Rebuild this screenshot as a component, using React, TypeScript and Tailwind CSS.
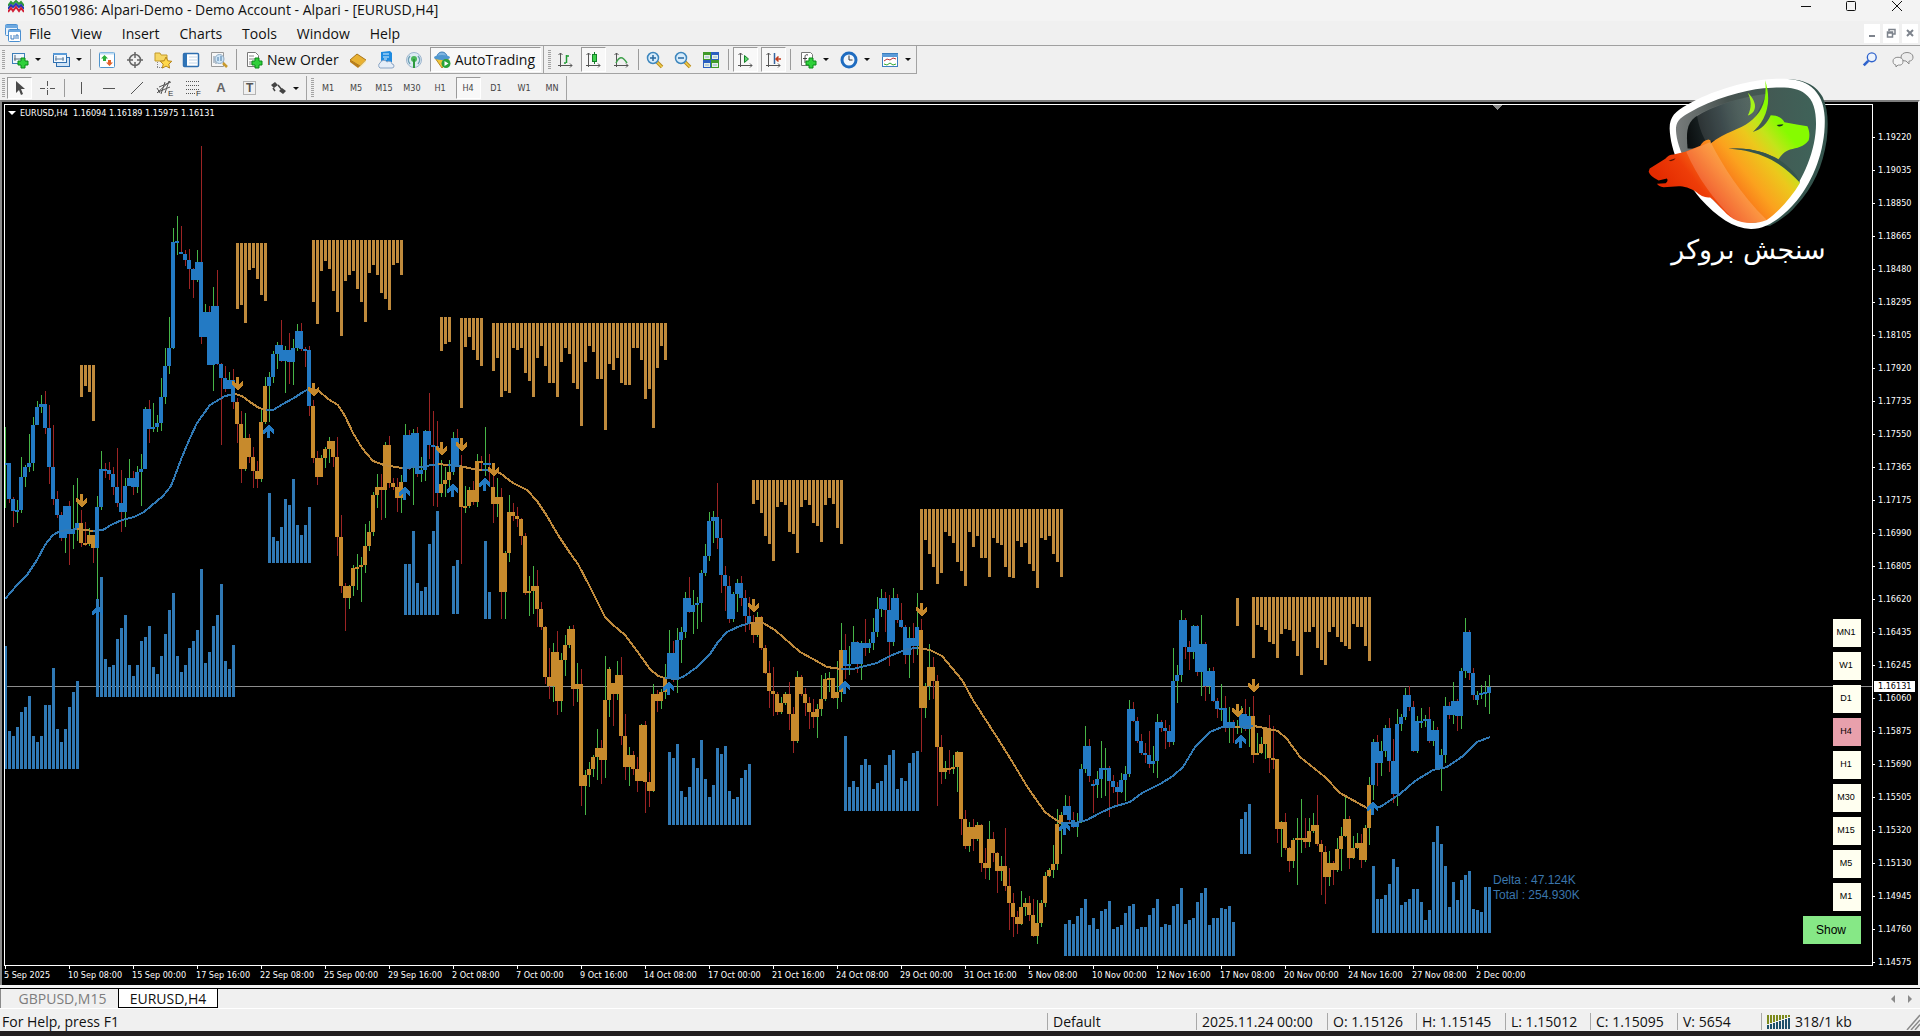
import type { ReactNode } from "react";

type Trend = "up" | "down";
// close, high, low and, after a gap, the open
type Candle = [number, number, number, number?];

type Wave = {
  start: number;
  trend: Trend;
  base: number;
  ends: number[];
};

const PITCH = 4;
const BLUE = "#237ac4";
const ORANGE = "#c78a2c";
const LINE_BLUE = "#3079b5";
const LINE_ORANGE = "#bf8a3c";

const menuItems = ["File", "View", "Insert", "Charts", "Tools", "Window", "Help"];
const periods = ["M1", "M5", "M15", "M30", "H1", "H4", "D1", "W1", "MN"];
const panelPeriods = ["MN1", "W1", "D1", "H4", "H1", "M30", "M15", "M5", "M1"];

const prices = [
  "1.19220", "1.19035", "1.18850", "1.18665", "1.18480", "1.18295", "1.18105",
  "1.17920", "1.17735", "1.17550", "1.17365", "1.17175", "1.16990", "1.16805",
  "1.16620", "1.16435", "1.16245", "1.16060", "1.15875", "1.15690", "1.15505",
  "1.15320", "1.15130", "1.14945", "1.14760", "1.14575",
];

const times = [
  "5 Sep 2025", "10 Sep 08:00", "15 Sep 00:00", "17 Sep 16:00", "22 Sep 08:00",
  "25 Sep 00:00", "29 Sep 16:00", "2 Oct 08:00", "7 Oct 00:00", "9 Oct 16:00",
  "14 Oct 08:00", "17 Oct 00:00", "21 Oct 16:00", "24 Oct 08:00", "29 Oct 00:00",
  "31 Oct 16:00", "5 Nov 08:00", "10 Nov 00:00", "12 Nov 16:00", "17 Nov 08:00",
  "20 Nov 00:00", "24 Nov 16:00", "27 Nov 08:00", "2 Dec 00:00",
];

const candles: Candle[] = [
  [463, 427, 508], [499, 463, 503], [511, 497, 527], [510, 500, 523], [477, 457, 513],
  [467, 465, 487], [463, 434, 472], [425, 417, 471], [407, 401, 421], [404, 395, 413],
  [428, 391, 434], [467, 405, 484], [499, 425, 505], [515, 491, 518], [538, 512, 541],
  [506, 506, 553], [534, 501, 565], [530, 485, 549], [523, 478, 541], [543, 510, 547],
  [544, 522, 546], [535, 528, 546], [548, 535, 563], [507, 496, 599], [469, 451, 510],
  [470, 463, 478], [474, 462, 480], [487, 467, 495], [503, 448, 507], [512, 470, 532],
  [486, 478, 527], [478, 459, 486], [487, 471, 495], [472, 466, 493], [469, 454, 506],
  [409, 407, 468], [429, 400, 443], [427, 403, 432], [423, 415, 432], [397, 378, 431],
  [366, 348, 404], [348, 317, 374], [242, 228, 349], [241, 216, 255], [254, 226, 254, 252],
  [260, 250, 266], [269, 249, 289], [280, 268, 298], [262, 250, 282], [337, 146, 344],
  [312, 304, 336], [365, 306, 365], [306, 287, 391], [364, 270, 365], [378, 363, 445],
  [389, 366, 392], [380, 372, 389], [402, 369, 409], [424, 398, 443], [469, 411, 483],
  [438, 413, 471], [457, 434, 463], [471, 447, 488], [479, 461, 488], [422, 410, 482],
  [386, 377, 424], [377, 372, 422], [354, 351, 383], [345, 342, 369], [361, 320, 362],
  [350, 346, 393], [362, 333, 384], [348, 339, 385], [331, 324, 351], [349, 323, 351],
  [350, 347, 367], [406, 346, 416], [458, 400, 463], [477, 451, 485], [458, 455, 477],
  [449, 447, 468], [441, 437, 463], [457, 441, 467], [537, 437, 556], [586, 515, 593],
  [598, 583, 631], [586, 585, 609], [568, 565, 596], [567, 554, 590], [565, 557, 602],
  [546, 524, 573], [532, 521, 551], [495, 492, 536], [487, 474, 508], [490, 474, 520],
  [445, 442, 518], [483, 436, 488], [487, 478, 490], [498, 478, 512], [482, 475, 513],
  [435, 424, 482], [468, 430, 470], [433, 429, 505], [474, 427, 477], [470, 457, 482],
  [431, 430, 481], [445, 393, 459], [446, 411, 506], [493, 421, 507], [484, 460, 497],
  [480, 467, 497], [472, 460, 490], [438, 432, 475], [467, 429, 467], [507, 455, 564],
  [506, 486, 513], [490, 487, 508], [502, 481, 505], [461, 454, 507], [463, 456, 469],
  [463, 427, 476], [464, 454, 484], [504, 476, 523, 487], [497, 478, 517], [592, 488, 619],
  [553, 551, 619], [512, 495, 562], [516, 503, 521], [519, 507, 527], [536, 518, 545],
  [593, 533, 595], [591, 576, 616], [586, 566, 614], [609, 570, 627], [627, 602, 630],
  [677, 626, 684], [686, 648, 699], [652, 643, 702], [701, 631, 715], [660, 653, 712],
  [645, 635, 676], [629, 626, 648], [689, 625, 706], [684, 663, 702], [786, 669, 806],
  [775, 770, 815], [769, 762, 787], [757, 755, 777], [748, 729, 780], [760, 740, 784],
  [700, 656, 778], [669, 667, 717], [694, 683, 726, 683], [675, 661, 700], [736, 657, 745],
  [767, 714, 780], [755, 747, 786], [769, 751, 775], [781, 757, 792], [725, 724, 781],
  [782, 721, 813], [791, 772, 807], [694, 684, 792], [701, 690, 712], [692, 689, 709],
  [678, 664, 699], [653, 630, 679], [680, 641, 682], [640, 628, 693], [632, 627, 663],
  [598, 592, 638], [612, 577, 613], [605, 590, 634], [603, 597, 629], [573, 570, 622],
  [556, 544, 576], [521, 512, 561], [517, 511, 543], [538, 483, 549], [575, 519, 593],
  [586, 566, 611], [619, 576, 623], [594, 592, 622], [583, 579, 612], [598, 576, 606],
  [616, 590, 632], [623, 597, 630], [635, 615, 643], [617, 612, 637], [648, 616, 650],
  [673, 645, 674], [691, 661, 708], [694, 667, 716], [712, 692, 715], [703, 697, 714],
  [694, 692, 705], [714, 682, 730], [741, 707, 753], [677, 671, 743], [694, 675, 696],
  [703, 688, 716], [712, 697, 729], [717, 699, 728], [709, 704, 738], [699, 675, 716],
  [679, 673, 701], [678, 672, 692], [698, 678, 699], [692, 661, 709], [650, 623, 702],
  [666, 634, 679], [664, 646, 675], [642, 626, 664], [664, 641, 673], [643, 641, 680],
  [648, 619, 656], [643, 639, 653], [632, 618, 650], [609, 597, 637], [598, 589, 617],
  [610, 592, 632], [642, 595, 666], [598, 588, 646], [620, 594, 623], [627, 603, 628],
  [655, 625, 664], [638, 627, 678], [646, 623, 663], [627, 593, 655], [708, 619, 752, 630],
  [686, 683, 718], [667, 644, 700], [681, 657, 699], [747, 675, 806], [772, 735, 784],
  [768, 761, 779], [769, 750, 774], [767, 755, 774], [752, 751, 792], [819, 752, 835],
  [846, 810, 849], [827, 822, 852], [839, 819, 851], [825, 822, 841], [863, 824, 872],
  [868, 848, 879], [839, 821, 880], [853, 832, 862], [871, 852, 893], [866, 856, 881],
  [886, 828, 891], [903, 868, 930], [917, 893, 937], [924, 911, 934], [907, 891, 925],
  [903, 898, 916], [915, 896, 921], [936, 899, 937], [923, 900, 944], [903, 900, 927],
  [876, 872, 907], [870, 868, 877], [864, 845, 878], [824, 809, 870], [815, 812, 854],
  [806, 795, 814], [820, 796, 823], [827, 812, 828], [822, 813, 837], [769, 764, 823],
  [746, 726, 773], [776, 739, 782], [785, 780, 813, 784], [779, 771, 798], [768, 741, 798],
  [768, 748, 796], [781, 766, 817], [787, 775, 793], [792, 782, 805], [780, 773, 793],
  [774, 766, 801], [709, 700, 777], [721, 702, 722], [741, 717, 743], [753, 734, 755],
  [755, 743, 763], [764, 731, 768], [761, 746, 773], [722, 714, 778], [728, 720, 732],
  [731, 720, 749], [742, 725, 747], [681, 648, 745], [675, 665, 703], [620, 610, 682],
  [647, 618, 659], [652, 641, 670], [626, 625, 659], [672, 625, 676], [644, 615, 696],
  [686, 642, 701], [671, 668, 694], [701, 667, 702], [709, 698, 718], [708, 684, 721],
  [727, 696, 732], [722, 707, 743], [727, 720, 743], [726, 720, 734], [714, 706, 733],
  [729, 699, 731], [716, 707, 747], [755, 696, 763], [753, 733, 755], [744, 737, 754],
  [729, 727, 759], [758, 715, 773], [759, 726, 769], [829, 759, 843], [822, 821, 857],
  [848, 813, 850], [861, 847, 872], [840, 838, 868], [838, 818, 885], [838, 799, 853],
  [842, 818, 848], [831, 818, 847], [825, 813, 833], [844, 795, 846], [852, 840, 895],
  [877, 846, 904], [863, 851, 886], [870, 861, 885], [849, 838, 872], [836, 827, 871],
  [819, 797, 837], [858, 816, 869], [848, 836, 859], [843, 833, 849], [860, 834, 868],
  [828, 825, 862], [785, 777, 845], [742, 739, 800], [763, 735, 786], [751, 741, 776],
  [728, 725, 757], [761, 718, 772], [794, 739, 803], [724, 709, 806], [717, 714, 731],
  [695, 688, 720], [707, 686, 711], [751, 701, 752], [721, 716, 753], [721, 708, 728],
  [719, 715, 727], [741, 707, 743], [730, 721, 746], [768, 727, 770], [755, 749, 791],
  [706, 697, 763], [715, 702, 719], [701, 682, 724], [716, 699, 731], [671, 668, 729],
  [632, 618, 678], [673, 630, 680], [695, 668, 700], [695, 691, 705, 700], [693, 685, 699],
  [692, 681, 707], [687, 675, 714, 693],
];

const waves: Wave[] = [
  { start: 1, trend: "up", base: 769, ends: [646, 731, 736, 727, 712, 707, 696, 736, 742, 736, 705, 705, 668, 729, 742, 729, 707, 692, 681] },
  { start: 20, trend: "down", base: 365, ends: [397, 386, 392, 421] },
  { start: 24, trend: "up", base: 697, ends: [599, 577, 659, 667, 665, 639, 628, 615, 665, 676, 665, 641, 637, 626, 667, 674, 656, 634, 610, 593, 656, 672, 665, 648, 641, 630, 569, 663, 652, 626, 615, 584, 661, 669, 645] },
  { start: 59, trend: "down", base: 243, ends: [309, 305, 323, 270, 268, 279, 295, 301] },
  { start: 67, trend: "up", base: 563, ends: [493, 537, 541, 527, 499, 505, 479, 525, 535, 525, 507] },
  { start: 78, trend: "down", base: 240, ends: [302, 324, 271, 261, 269, 291, 312, 336, 281, 275, 271, 289, 302, 322, 273, 265, 275, 293, 299, 310, 265, 263, 275] },
  { start: 101, trend: "up", base: 615, ends: [564, 564, 531, 583, 591, 587, 544, 531, 511] },
  { start: 110, trend: "down", base: 317, ends: [351, 344, 342] },
  { start: 113, trend: "up", base: 614, ends: [566, 560] },
  { start: 115, trend: "down", base: 318, ends: [408, 347, 337, 350, 360, 366] },
  { start: 121, trend: "up", base: 619, ends: [541, 592] },
  { start: 123, trend: "down", base: 323, ends: [371, 358, 397, 391, 393, 348, 350, 348, 373, 381, 397, 358, 346, 366, 383, 383, 397, 362, 348, 354, 383, 389, 426, 362, 346, 352, 379, 379, 430, 364, 370, 358, 383, 385, 385, 348, 348, 360, 399, 389, 428, 368, 346, 360] },
  { start: 167, trend: "up", base: 825, ends: [752, 758, 744, 791, 797, 787, 758, 768, 740, 779, 797, 785, 748, 754, 746, 791, 799, 797, 778, 770, 764] },
  { start: 188, trend: "down", base: 480, ends: [504, 500, 513, 536, 544, 561, 507, 502, 505, 532, 534, 553, 507, 500, 505, 523, 526, 542, 505, 498, 504, 528, 544] },
  { start: 211, trend: "up", base: 811, ends: [736, 787, 781, 787, 765, 759, 765, 789, 783, 781, 765, 755, 750, 789, 778, 781, 763, 753, 751] },
  { start: 230, trend: "down", base: 509, ends: [590, 540, 554, 567, 584, 573, 532, 536, 543, 562, 571, 586, 532, 547, 536, 558, 558, 577, 538, 543, 545, 567, 577, 578, 541, 547, 543, 564, 571, 588, 538, 540, 536, 554, 562, 577] },
  { start: 266, trend: "up", base: 956, ends: [924, 920, 924, 916, 908, 899, 925, 918, 929, 911, 909, 901, 929, 927, 925, 913, 906, 904, 929, 927, 927, 915, 908, 899, 927, 924, 925, 906, 904, 888, 924, 920, 918, 902, 893, 888, 925, 918, 918, 908, 909, 906, 922] },
  { start: 309, trend: "down", base: 598, ends: [626] },
  { start: 310, trend: "up", base: 854, ends: [819, 812, 804] },
  { start: 313, trend: "down", base: 597, ends: [658, 625, 627, 630, 642, 644, 658, 634, 629, 630, 641, 656, 675, 632, 632, 627, 648, 660, 665, 632, 627, 637, 642, 646, 649, 624, 627, 627, 646, 661] },
  { start: 343, trend: "up", base: 933, ends: [866, 899, 899, 895, 884, 859, 867, 905, 902, 899, 889, 889, 902, 920, 910, 842, 826, 844, 866, 907, 882, 900, 880, 875, 871, 909, 910, 912, 887, 887] },
];

const average: { trend: Trend; points: string }[] = [
  { trend: "up", points: "5,599 17,585 27,575 37,560 45,545 53,535 60,531 77,529" },
  { trend: "down", points: "77,529 93,531" },
  { trend: "up", points: "93,531 103,530 111,525 122,520 134,517 144,512 157,501 163,496 171,486 182,457 190,438 197,423 210,405 225,396 235,394" },
  { trend: "down", points: "235,394 242,396 250,402 259,408 266,410" },
  { trend: "up", points: "266,410 273,410 283,404 294,398 303,392 309,389" },
  { trend: "down", points: "309,389 319,391 328,399 338,405 345,416 353,433 362,448 373,461 384,465 402,468" },
  { trend: "up", points: "402,468 420,467 438,464" },
  { trend: "down", points: "438,464 448,465" },
  { trend: "up", points: "448,465 460,466" },
  { trend: "down", points: "460,466 473,469 482,470" },
  { trend: "up", points: "482,470 494,471" },
  { trend: "down", points: "494,471 500,473 513,483 527,490 537,501 547,516 558,535 570,553 578,564 590,587 605,617 612,624 625,635 637,651 650,669 658,676 665,678" },
  { trend: "up", points: "665,678 676,679 683,677 697,667 710,654 718,642 727,632 740,626 750,623" },
  { trend: "down", points: "750,623 763,623 775,630 800,652 813,659 827,667 841,669" },
  { trend: "up", points: "841,669 853,669 877,663 890,656 907,649 918,648" },
  { trend: "down", points: "918,648 930,650 942,656 962,680 973,700 1000,742 1013,763 1028,788 1045,812 1053,818 1061,823" },
  { trend: "up", points: "1061,823 1075,823 1087,820 1100,813 1113,807 1130,802 1142,793 1160,784 1173,776 1183,767 1195,747 1210,732 1222,727 1235,727" },
  { trend: "down", points: "1235,727 1240,727" },
  { trend: "up", points: "1240,727 1253,726" },
  { trend: "down", points: "1253,726 1260,727 1278,731 1287,739 1300,757 1325,777 1340,793 1367,808" },
  { trend: "up", points: "1367,808 1380,807 1400,794 1415,781 1433,770 1447,767 1463,756 1477,742 1490,737" },
];

const sellArrows = [
  [81, 494], [237, 377], [313, 383], [441, 442], [461, 438],
  [493, 463], [753, 599], [921, 603], [1237, 704], [1253, 679],
];

const buyArrows = [
  [97, 606], [268, 425], [404, 487], [452, 484], [484, 478],
  [668, 682], [844, 681], [1064, 822], [1240, 735], [1372, 802],
];

function trendAt(index: number): Trend {
  const wave = waves.find(
    (w) => index >= w.start && index < w.start + w.ends.length,
  );
  return wave ? wave.trend : "up";
}

function PriceChart() {
  return (
    <svg className="absolute inset-0 h-full w-full" role="img" aria-label="EURUSD H4 chart">
      {/* data is in window coordinates, the plot starts at 5,105 */}
      <g transform="translate(-5 -105)" shapeRendering="crispEdges">
        <rect x="5" y="686" width="100%" height="1" fill="#8c8c8c" />
        {waves.map((wave) =>
          wave.ends.map((end, i) => (
            <rect
              key={`${wave.start}-${i}`}
              x={(wave.start + i) * PITCH}
              y={Math.min(end, wave.base)}
              width="3"
              height={Math.abs(wave.base - end)}
              fill={wave.trend === "up" ? LINE_BLUE : LINE_ORANGE}
            />
          )),
        )}
        {candles.map(([close, high, low, gapOpen], i) => {
          const index = i + 1;
          const open = gapOpen ?? candles[i - 1]?.[0] ?? close;
          const x = index * PITCH;
          return (
            <g key={index}>
              <rect
                x={x + 1}
                y={high}
                width="1"
                height={low - high}
                fill={close <= open ? "#47b547" : "#9c2424"}
              />
              <rect
                x={x - 1}
                y={Math.min(open, close)}
                width="4"
                height={Math.max(2, Math.abs(open - close))}
                fill={trendAt(index) === "up" ? BLUE : ORANGE}
              />
            </g>
          );
        })}
        {average.map((part) => (
          <polyline
            key={part.points}
            points={part.points}
            fill="none"
            stroke={part.trend === "up" ? LINE_BLUE : LINE_ORANGE}
            strokeWidth="2"
          />
        ))}
        {sellArrows.map(([x, y]) => (
          <path
            key={`${x}-${y}`}
            transform={`translate(${x} ${y})`}
            d="M-1 0h3v7l3 -3h1v4l-5 5h-1l-5 -5v-4h1l3 3z"
            fill={ORANGE}
          />
        ))}
        {buyArrows.map(([x, y]) => (
          <path
            key={`${x}-${y}`}
            transform={`translate(${x} ${y})`}
            d="M-1 13h3v-7l3 3h1v-4l-5 -5h-1l-5 5v4h1l3 -3z"
            fill={BLUE}
          />
        ))}
        <path d="M1492 105h10l-5 5z" fill="#8a8a8a" />
        <g fill="#3a76ad" fontSize="12" fontFamily="Liberation Sans, Arial, sans-serif">
          <text x="1493" y="884">Delta : 47.124K</text>
          <text x="1493" y="899">Total : 254.930K</text>
        </g>
      </g>
    </svg>
  );
}

function BrokerLogo() {
  return (
    <div className="absolute -top-[28px] right-[42px] flex w-[183px] flex-col">
      <svg viewBox="140 230 550 462" className="w-full" role="img" aria-label="logo">
        <defs>
          <linearGradient id="glass" x1="230" y1="400" x2="650" y2="420" gradientUnits="userSpaceOnUse">
            <stop offset="0" stopColor="#777b7b" />
            <stop offset="0.35" stopColor="#46524f" />
            <stop offset="1" stopColor="#3f6359" />
          </linearGradient>
          <linearGradient id="shade" x1="262" y1="400" x2="480" y2="350" gradientUnits="userSpaceOnUse">
            <stop offset="0" stopColor="#0b0f10" />
            <stop offset="0.5" stopColor="#29383a" />
            <stop offset="1" stopColor="#3a5a52" stopOpacity="0" />
          </linearGradient>
          <linearGradient id="beast" x1="200" y1="560" x2="500" y2="320" gradientUnits="userSpaceOnUse">
            <stop offset="0" stopColor="#e42b00" />
            <stop offset="0.2" stopColor="#ee3d08" />
            <stop offset="0.4" stopColor="#f9781a" />
            <stop offset="0.55" stopColor="#fba21e" />
            <stop offset="0.74" stopColor="#ecc81c" />
            <stop offset="0.86" stopColor="#c4e41a" />
            <stop offset="1" stopColor="#86fb00" />
          </linearGradient>
        </defs>
        <path fill="#35544d" d="M560 236C620 238 650 258 668 290C684 325 686 370 680 420C668 500 640 560 590 615C570 640 540 662 510 677L450 680L600 540L650 300Z" />
        <path fill="#fff" d="M208 385C208 350 225 333 262 313C330 272 430 245 490 238C560 231 605 236 634 260C660 282 672 310 674 350C678 440 645 535 590 602C550 650 500 688 452 687C400 685 350 650 300 595C245 530 210 450 208 385Z" />
        <path fill="url(#glass)" d="M227 390C227 365 235 355 265 338C340 295 430 270 490 264C560 259 590 262 615 280C640 298 648 330 648 370C648 450 610 540 560 600C520 645 490 668 455 668C410 665 370 635 330 590C270 520 230 450 227 390Z" />
        <path fill="url(#shade)" d="M262 445C258 400 258 370 285 350C340 315 430 288 500 280L500 450Z" />
        <path fill="#fff" opacity="0.1" d="M290 345C295 375 305 405 318 425L440 400L500 280C420 290 340 315 290 345Z" />
        <path fill="url(#beast)" d="M145 515L148 505L195 476Q205 463 220 463L255 455L300 437Q308 421 325 418Q334 420 331 430C375 395 420 387 447 366C485 338 502 300 495 240C508 280 508 320 490 355C481 372 470 385 458 395C485 388 500 370 512 345C530 345 545 352 553 366L590 373L622 378C628 390 630 405 626 420C612 440 590 443 570 448C550 455 545 465 535 477C500 457 450 440 384 446C450 447 480 458 530 483C560 500 590 530 600 548C575 590 540 632 500 660C470 672 430 672 400 657C370 637 355 612 330 592C315 592 305 590 290 577C270 562 250 558 235 558L190 561Q175 560 170 551L196 549Q205 543 200 535L175 541Q150 530 145 515Z" />
        <path fill="#a6f41a" d="M443 277C472 305 472 335 443 346C455 322 454 300 443 277Z" />
        <path fill="#fff" opacity="0.17" d="M258 455L331 425C370 500 420 580 500 660C470 672 430 672 400 657C340 600 290 530 258 455Z" />
        <path fill="#35544d" d="M384 446C440 440 500 452 550 488C580 512 594 530 600 548C570 515 530 483 490 468C450 453 420 448 384 446Z" />
        <path fill="#16301c" d="M530 374L550 372Q548 380 534 378Z" />
        <path fill="#5c1300" d="M205 481L226 474Q222 482 212 483Z" />
      </svg>
      <span
        dir="rtl"
        lang="fa"
        className="pl-5 text-center font-['DejaVu_Sans',sans-serif] text-[27px] leading-[38px] whitespace-nowrap text-white"
      >
        سنجش بروکر
      </span>
    </div>
  );
}

function Icon({ children, size = "md" }: { children: ReactNode; size?: "md" | "sm" }) {
  return (
    <svg
      viewBox="0 0 18 18"
      aria-hidden="true"
      className={size === "md" ? "size-[18px] shrink-0" : "size-4 shrink-0"}
    >
      {children}
    </svg>
  );
}

const Plus = () => (
  <path d="M10 7h4v3h3v4h-3v3h-4v-3H7v-4h3z" fill="#2fd03a" stroke="#0b8a18" />
);

const Axes = () => (
  <path d="M4.500 2v14M2.500 4l2-2 2 2M2 14.500h14M14 12.500l2 2-2 2" fill="none" stroke="#555" />
);

const Lens = ({ sign }: { sign: string }) => (
  <>
    <path d="M11 11l5 5" stroke="#b98a1c" strokeWidth="3.500" />
    <path d="M11 11l5 5" stroke="#f0cf4e" strokeWidth="1.500" />
    <circle cx="7" cy="7" r="5.500" fill="#d7ecfb" stroke="#3d86bd" strokeWidth="1.500" />
    <path d={sign} stroke="#2768a0" strokeWidth="1.500" />
  </>
);

const Caret = () => (
  <svg viewBox="0 0 6 3" aria-hidden="true" className="h-[3px] w-[6px]">
    <path d="M0 0h6L3 3z" fill="#111" />
  </svg>
);

const Grip = () => (
  <span className="h-5 w-[3px] shrink-0 bg-[repeating-linear-gradient(#a3a3a3_0_1px,#efefef_1px_2px)]" />
);

const Divider = () => (
  <span className="flex w-[6px] shrink-0 justify-center self-stretch py-[3px]">
    <span className="w-px bg-[#9b9b9b]" />
  </span>
);

function ToolButton({ label, pressed = false, children }: {
  label: string;
  pressed?: boolean;
  children: ReactNode;
}) {
  return (
    <button
      type="button"
      aria-label={label}
      aria-pressed={pressed}
      className="flex w-7 shrink-0 items-center justify-center self-stretch py-px"
    >
      <span
        className={
          pressed
            ? "flex h-full w-[25px] items-center justify-center border border-t-[#9a9a9a] border-r-white border-b-white border-l-[#9a9a9a] bg-[#f8f8f8]"
            : "flex h-full items-center justify-center"
        }
      >
        {children}
      </span>
    </button>
  );
}

function DropButton({ label, children }: { label: string; children: ReactNode }) {
  return (
    <button
      type="button"
      aria-label={label}
      className="flex w-[41px] shrink-0 items-center gap-[6px] self-stretch pl-[6px]"
    >
      {children}
      <Caret />
    </button>
  );
}

function TitleBar() {
  return (
    <header className="flex h-[21px] items-start bg-[#f3f3f3] pl-[8px]">
      <svg viewBox="0 0 16 14" aria-hidden="true" className="mr-[6px] h-[14px] w-4 shrink-0">
        <path d="M0 6l3-4 2 2 3-3 3 3 2-2 3 4" fill="none" stroke="#2f9a3a" strokeWidth="2" />
        <path d="M0 9l3-4 2 2 3-3 3 3 2-2 3 4" fill="none" stroke="#2338b8" strokeWidth="2" />
        <path d="M0 12l3-4 2 3 3-4 3 4 2-3 3 4" fill="none" stroke="#d11f36" strokeWidth="2" />
      </svg>
      <h1 className="text-[14px] leading-[19px] whitespace-nowrap">
        16501986: Alpari-Demo - Demo Account - Alpari - [EURUSD,H4]
      </h1>
      <div className="ml-auto flex gap-[29px] pr-[15px]">
        <button type="button" aria-label="Minimize" className="size-4">
          <svg viewBox="0 0 16 16"><path d="M2 6.500h10" stroke="#111" /></svg>
        </button>
        <button type="button" aria-label="Maximize" className="size-4">
          <svg viewBox="0 0 16 16"><rect x="2.500" y="1.500" width="9" height="9" rx="1" fill="none" stroke="#111" /></svg>
        </button>
        <button type="button" aria-label="Close" className="size-4">
          <svg viewBox="0 0 16 16"><path d="M3 1l10 10M13 1L3 11" stroke="#111" /></svg>
        </button>
      </div>
    </header>
  );
}

function MenuBar() {
  return (
    <nav className="flex h-[25px] items-center border-b border-[#a0a0a0] pr-[2px] pl-[5px]">
      <svg viewBox="0 0 16 18" aria-hidden="true" className="mr-2 h-[18px] w-4 shrink-0">
        <rect x="0.500" y="0.500" width="12" height="11" rx="1" fill="#e8f2fc" stroke="#4a8fd0" />
        <path d="M0 1h13v3H0z" fill="#6ca8e0" />
        <rect x="3.500" y="5.500" width="12" height="12" rx="1" fill="#fff" stroke="#4a8fd0" />
        <path d="M4 6h11v2H4z" fill="#6ca8e0" />
        <path d="M6 11v4h3M9 11v4M11 15v-4h2v4" fill="none" stroke="#3c7cc0" />
      </svg>
      <ul className="flex gap-5 text-[14px]">
        {menuItems.map((item) => (
          <li key={item}>
            <button type="button">{item}</button>
          </li>
        ))}
      </ul>
      <div className="ml-auto flex gap-[3px]">
        <button type="button" aria-label="Minimize chart" className="flex h-[19px] w-4 items-center justify-center bg-white">
          <svg viewBox="0 0 10 10" className="size-[10px]"><path d="M2 8h6" stroke="#7d838c" strokeWidth="2" /></svg>
        </button>
        <button type="button" aria-label="Restore chart" className="flex h-[19px] w-4 items-center justify-center bg-white">
          <svg viewBox="0 0 10 10" className="size-[10px]">
            <path d="M3 3V1.500h6V6H7M1.500 4h5v5h-5zM1.500 5h5" fill="none" stroke="#7d838c" strokeWidth="1.500" />
          </svg>
        </button>
        <button type="button" aria-label="Close chart" className="flex h-[19px] w-4 items-center justify-center bg-white">
          <svg viewBox="0 0 10 10" className="size-[10px]"><path d="M2 2l6 6M8 2L2 8" stroke="#7d838c" strokeWidth="2" /></svg>
        </button>
      </div>
    </nav>
  );
}

function StandardToolbar() {
  return (
    <div className="flex h-7 items-start">
      <div className="flex h-7 items-center border-r border-b border-[#a3a3a3] pl-[2px]">
        <Grip />
        <DropButton label="New chart">
          <Icon>
            <rect x="1.500" y="2.500" width="12" height="10" fill="#eef6fd" stroke="#3d7fb8" />
            <path d="M4 4v6M3 8h8" stroke="#5b6b78" />
            <Plus />
          </Icon>
        </DropButton>
        <DropButton label="Profiles">
          <Icon>
            <rect x="4.500" y="6.500" width="13" height="9" fill="#cfe3f6" stroke="#2f6fb0" />
            <rect x="1.500" y="2.500" width="13" height="9" fill="#f2f8fe" stroke="#2f6fb0" />
            <path d="M1 3h14" stroke="#5a9bd8" strokeWidth="2" />
            <path d="M4 5v5M3 8h9M11 6v4" stroke="#5f7f9d" />
          </Icon>
        </DropButton>
        <Divider />
        <ToolButton label="Market Watch">
          <Icon>
            <rect x="1.500" y="1.500" width="15" height="15" rx="1" fill="#fff" stroke="#4e93cc" />
            <path d="M2 2.500h14" stroke="#bcdcf5" strokeWidth="2" />
            <path d="M6.500 4l3.500 3.500H8V10H5V7.500H3z" fill="#2bb03a" />
            <path d="M11.500 15l-3.500-3.500h2V9h3v2.500h2z" fill="#e2622a" />
          </Icon>
        </ToolButton>
        <ToolButton label="Data Window">
          <Icon>
            <circle cx="9" cy="9" r="5.500" fill="none" stroke="#666" strokeWidth="1.500" />
            <path d="M9 1v6M9 11v6M1 9h6M11 9h6" stroke="#666" strokeWidth="1.500" />
          </Icon>
        </ToolButton>
        <ToolButton label="Navigator">
          <Icon>
            <path d="M1 2h5l1 2h6v6H1z" fill="#f6d765" stroke="#c39a2b" />
            <path d="M3.500 11v6M3 16.500h5" stroke="#888" strokeDasharray="1 1" />
            <path d="M12 6l1.800 3.800 4 .5-3 2.800.8 4-3.600-2-3.600 2 .8-4-3-2.800 4-.5z" fill="#ffd84a" stroke="#b8861a" />
          </Icon>
        </ToolButton>
        <ToolButton label="Terminal">
          <Icon>
            <rect x="1.500" y="2.500" width="15" height="13" rx="1" fill="#fff" stroke="#2f6fb0" strokeWidth="1.500" />
            <path d="M2 3h3v12H2z" fill="#2f75b8" />
            <path d="M7 6h8M7 9h8M7 12h8" stroke="#c3d6e8" />
          </Icon>
        </ToolButton>
        <ToolButton label="Strategy Tester">
          <Icon>
            <path d="M1.500 1.500h12v14h-12z" fill="#f6f6f6" stroke="#999" />
            <path d="M4 12V5M6 13V9" stroke="#7a8fa5" />
            <path d="M13 12l4 4" stroke="#c99a2c" strokeWidth="2.500" />
            <circle cx="9.500" cy="8" r="4.500" fill="#cfe6f8" stroke="#8fa9c0" />
            <path d="M8 10V6M11 10V5" stroke="#4b7ba6" />
          </Icon>
        </ToolButton>
        <Divider />
        <button type="button" className="flex items-center gap-1 self-stretch pr-[5px] pl-[6px] text-[14px] whitespace-nowrap">
          <Icon>
            <path d="M2.500 1.500h8l3 3v11h-11z" fill="#fff" stroke="#777" />
            <path d="M4 5h5M4 8h7M4 11h4M4 13h3" stroke="#888" />
            <Plus />
          </Icon>
          New Order
        </button>
        <ToolButton label="MetaEditor">
          <Icon>
            <path d="M1 9l7-6 9 6-6 6z" fill="#e8b132" stroke="#a8751a" />
            <path d="M1 9v2l8 6 2-2z" fill="#b97d18" />
            <path d="M11 15l6-6v2l-6 6z" fill="#f7e7b0" />
          </Icon>
        </ToolButton>
        <ToolButton label="Virtual Hosting">
          <Icon>
            <path d="M4 1l9-1 2 2v9H4z" fill="#1f8be0" />
            <path d="M6 3h6M6 6h6M7 8h3" stroke="#d8efff" />
            <path d="M3 17a3 3 0 0 1 0-5 4 4 0 0 1 7-1 3 3 0 0 1 5 2 2 2 0 0 1 0 4z" fill="#e6eef8" stroke="#8aa4c4" />
          </Icon>
        </ToolButton>
        <ToolButton label="Signals">
          <Icon>
            <circle cx="9" cy="9" r="7.500" fill="#dcebf2" stroke="#9fb6cf" />
            <path d="M5 5a6 6 0 0 0 0 8M13 5a6 6 0 0 1 0 8" fill="none" stroke="#6f9fb5" strokeWidth="1.500" />
            <circle cx="9" cy="8" r="3" fill="#49b558" />
            <path d="M9 8v9" stroke="#2d9a3e" strokeWidth="2" />
          </Icon>
        </ToolButton>
        <button
          type="button"
          aria-pressed="true"
          className="mx-[2px] flex h-[25px] items-center gap-1 border border-t-[#9a9a9a] border-r-white border-b-white border-l-[#9a9a9a] bg-[#f8f8f8] pr-[5px] pl-[2px] text-[14px] whitespace-nowrap"
        >
          <Icon>
            <path d="M2 7l7 10 7-8z" fill="#f0c63c" stroke="#b88c22" />
            <path d="M4 6a5 5 0 0 1 10 0z" fill="#7fb6e2" stroke="#3d7fb8" />
            <ellipse cx="9" cy="6.500" rx="8" ry="2.500" fill="#4f97cf" />
            <circle cx="13" cy="12.500" r="4.500" fill="#29a338" />
            <path d="M11.500 10l4 2.500-4 2.500z" fill="#fff" />
          </Icon>
          AutoTrading
        </button>
      </div>
      <div className="flex h-7 items-center border-r border-b border-[#a3a3a3] pl-[4px]">
        <Grip />
        <ToolButton label="Bar Chart">
          <Icon><Axes /><path d="M10.500 4v8M8 12h2M10 5h3" stroke="#1f9a33" strokeWidth="1.500" /></Icon>
        </ToolButton>
        <ToolButton label="Candlesticks" pressed>
          <Icon><Axes /><path d="M10.500 1v12" stroke="#15802a" /><rect x="8.500" y="3.500" width="4" height="7" fill="#3fd04c" stroke="#15802a" /></Icon>
        </ToolButton>
        <ToolButton label="Line Chart">
          <Icon><Axes /><path d="M4 12c3-6 6-8 11 0" fill="none" stroke="#3da04a" strokeWidth="1.500" /></Icon>
        </ToolButton>
        <Divider />
        <ToolButton label="Zoom In"><Icon><Lens sign="M4 7h6M7 4v6" /></Icon></ToolButton>
        <ToolButton label="Zoom Out"><Icon><Lens sign="M4 7h6" /></Icon></ToolButton>
        <ToolButton label="Tile Windows">
          <Icon>
            <path d="M1 1h8v8H1zM9 9h8v8H9z" fill="#3f9a2a" />
            <path d="M9 1h8v8H9zM1 9h8v8H1z" fill="#2a5fc0" />
            <path d="M2 4h6v4H2zM10 4h6v4h-6zM2 12h6v4H2zM10 12h6v4h-6z" fill="#e6f0e6" />
            <path d="M3 6h4M11 6h4M3 14h4M11 14h4" stroke="#8fb0d0" />
          </Icon>
        </ToolButton>
        <Divider />
        <ToolButton label="Auto Scroll" pressed>
          <Icon><Axes /><path d="M8.500 4.500v7l4-3.500z" fill="#5fd86a" stroke="#15802a" /></Icon>
        </ToolButton>
        <ToolButton label="Chart Shift" pressed>
          <Icon><Axes /><path d="M10.500 2v11" stroke="#3565a0" strokeWidth="1.500" /><path d="M17 8h-5M14.500 5.500L12 8l2.500 2.500" fill="none" stroke="#c03a1c" strokeWidth="1.500" /></Icon>
        </ToolButton>
        <Divider />
        <DropButton label="Indicators">
          <Icon>
            <path d="M2.500 1.500h9l2 2v11h-11z" fill="#fff" stroke="#777" />
            <path d="M9 4c-3-1-3 1-3 3v5M4 7.500h4" fill="none" stroke="#444" />
            <Plus />
          </Icon>
        </DropButton>
        <DropButton label="Periods">
          <Icon>
            <circle cx="9" cy="9" r="7" fill="#f2f7fc" stroke="#1f6cc0" strokeWidth="3" />
            <path d="M9 4.500V9h3.500" fill="none" stroke="#333" />
          </Icon>
        </DropButton>
        <DropButton label="Templates">
          <Icon>
            <rect x="1.500" y="2.500" width="15" height="13" fill="#fff" stroke="#3b7fc0" />
            <path d="M1 3h16v3H1z" fill="#5b9bd8" />
            <path d="M3 10l3-2 3 1 3-2 3 1" fill="none" stroke="#b33" />
            <path d="M3 13l3 1 3-2 3 2 3-1" fill="none" stroke="#3a3" />
          </Icon>
        </DropButton>
      </div>
      <div className="ml-auto flex items-center gap-[14px] pt-[6px] pr-[6px]">
        <button type="button" aria-label="Search">
          <Icon size="sm">
            <circle cx="11" cy="6" r="5" fill="#eef4fc" stroke="#2e62cc" strokeWidth="1.500" />
            <path d="M7 10l-5 5" stroke="#2e62cc" strokeWidth="3" />
          </Icon>
        </button>
        <button type="button" aria-label="Chat">
          <svg viewBox="0 0 22 16" aria-hidden="true" className="h-4 w-[22px]">
            <path d="M9 5c0-6 12-6 12 0 0 4-3 4-4 4v3l-3-3c-3 0-5-1-5-4z" fill="#ececec" stroke="#8b8b8b" />
            <path d="M1 9c0-5 10-5 10 0s-4 4-5 4l-2 2v-2c-2 0-3-2-3-4z" fill="#f5f5f5" stroke="#8b8b8b" />
          </svg>
        </button>
      </div>
    </div>
  );
}

function DrawingToolbar() {
  return (
    <div className="flex h-[26px] items-stretch pt-[2px]">
      <div className="flex items-center border-r border-[#a3a3a3] pr-[2px] pl-[2px]">
        <Grip />
        <ToolButton label="Cursor" pressed>
          <Icon><path d="M6 2v12l3-3 2 5 2-1-2-5h4z" fill="#4a4a4a" /></Icon>
        </ToolButton>
        <ToolButton label="Crosshair">
          <Icon><path d="M9.500 2v5M9.500 11v5M2 9.500h5M12 9.500h5M9 9.500h1" stroke="#555" /></Icon>
        </ToolButton>
        <Divider />
        <ToolButton label="Vertical line"><Icon><path d="M9.500 3v12" stroke="#555" /></Icon></ToolButton>
        <ToolButton label="Horizontal line"><Icon><path d="M3 9.500h12" stroke="#555" /></Icon></ToolButton>
        <ToolButton label="Trendline"><Icon><path d="M3 15L15 3" stroke="#555" /></Icon></ToolButton>
        <ToolButton label="Equidistant channel">
          <Icon>
            <path d="M1 14L14 2M3 8l12-5M2 13l12-5M5 15l4-12M9 14l4-12M1 9l3 5" stroke="#555" fill="none" />
            <text x="12" y="17" fontSize="8" fill="#333" fontFamily="Liberation Sans, sans-serif">E</text>
          </Icon>
        </ToolButton>
        <ToolButton label="Fibonacci">
          <Icon>
            <path d="M2 2.500h14M2 6.500h14M2 10.500h14M2 14.500h9" stroke="#555" strokeDasharray="1 1" />
            <text x="12" y="17" fontSize="8" fill="#333" fontFamily="Liberation Sans, sans-serif">F</text>
          </Icon>
        </ToolButton>
        <ToolButton label="Text"><span className="font-['Liberation_Sans',sans-serif] text-[13px] font-bold text-[#666]">A</span></ToolButton>
        <ToolButton label="Text label">
          <Icon>
            <rect x="3.500" y="2.500" width="12" height="13" fill="none" stroke="#777" strokeDasharray="1 1" />
            <text x="6" y="13" fontSize="12" fontWeight="bold" fill="#555" fontFamily="Liberation Sans, sans-serif">T</text>
          </Icon>
        </ToolButton>
        <DropButton label="Arrows">
          <Icon>
            <path d="M2 6l4-3 3 3-4 3zM10 12l3-3 4 3-3 3z" fill="#444" />
            <path d="M4 9l2 3M9 6l4 5" fill="none" stroke="#444" strokeWidth="1.500" />
          </Icon>
        </DropButton>
      </div>
      <div className="flex items-center border-r border-[#a3a3a3] pl-[4px]">
        <Grip />
        {periods.map((period) => (
          <ToolButton key={period} label={period} pressed={period === "H4"}>
            <span className="pt-px font-['DejaVu_Sans_Condensed','DejaVu_Sans',sans-serif] text-[9px] text-[#444]">{period}</span>
          </ToolButton>
        ))}
      </div>
    </div>
  );
}

function ChartWindow() {
  return (
    <main className="flex min-h-0 flex-1 border-t-2 border-r-2 border-l-2 border-t-[#7d7d7d] border-r-[#f0f0f0] border-l-[#8a8a8a] bg-black pt-[2px] pl-[2px] font-['DejaVu_Sans_Condensed','DejaVu_Sans',sans-serif] text-[9px] text-white">
      <div className="flex min-w-0 flex-1 flex-col">
        <section className="relative flex-1 border border-white">
          <PriceChart />
          <p className="relative flex items-center gap-1 pt-[2px] pl-[3px] leading-[12px] whitespace-pre">
            <svg viewBox="0 0 8 4" aria-hidden="true" className="h-1 w-2"><path d="M0 0h8L4 4z" fill="#fff" /></svg>
            EURUSD,H4  1.16094 1.16189 1.15975 1.16131
          </p>
          <BrokerLogo />
          <div className="absolute right-[11px] bottom-[21px] flex flex-col items-end gap-[5px] font-['Liberation_Sans',Arial,sans-serif] text-black">
            {panelPeriods.map((period) => (
              <button
                key={period}
                type="button"
                className={
                  period === "H4"
                    ? "size-7 bg-[#e8a0ac] pr-[2px] text-[9px]"
                    : "size-7 bg-[#fffff0] pr-[2px] text-[9px]"
                }
              >
                {period}
              </button>
            ))}
            <button type="button" className="h-7 w-[58px] bg-[#86e886] pr-[2px] text-[12px]">
              Show
            </button>
          </div>
        </section>
        <ol className="flex h-[19px] overflow-hidden">
          {times.map((time) => (
            <li key={time} className="w-16 shrink-0 leading-[13px] whitespace-nowrap">
              <span className="ml-px block h-[3px] w-px bg-white" />
              {time}
            </li>
          ))}
        </ol>
      </div>
      <aside className="relative w-[45px]">
        <ul className="pt-[17px]">
          {prices.map((price) => (
            <li key={price} className="flex h-[33px] items-center gap-[3px]">
              <span className="h-px w-[2px] bg-white" />
              {price}
            </li>
          ))}
        </ul>
        <span className="absolute top-[577px] left-px w-[41px] bg-white pl-[4px] leading-[11px] text-black">
          1.16131
        </span>
      </aside>
    </main>
  );
}

function ChartTabs() {
  return (
    <div className="flex h-[23px] items-start border-t-[3px] border-[#f4f4f4] text-[14px]">
      <div className="flex h-5 w-full border-t border-black">
        <button type="button" className="w-[118px] border-l border-[#8a8a8a] pt-px pl-[6px] leading-[18px] text-[#7d7d7d]">
          GBPUSD,M15
        </button>
        <button type="button" className="w-[100px] border-r border-b border-l border-black bg-white pt-px leading-[17px]">
          EURUSD,H4
        </button>
        <div className="ml-auto flex items-center gap-[13px] pr-[8px]">
          <button type="button" aria-label="Previous tab">
            <svg viewBox="0 0 4 8" className="h-2 w-1"><path d="M4 0v8L0 4z" fill="#8a8a8a" /></svg>
          </button>
          <button type="button" aria-label="Next tab">
            <svg viewBox="0 0 4 8" className="h-2 w-1"><path d="M0 0v8l4-4z" fill="#8a8a8a" /></svg>
          </button>
        </div>
      </div>
    </div>
  );
}

function StatusBar() {
  const cell = "flex items-center border-l border-[#a8a8a8] pl-[5px]";
  return (
    <footer className="flex h-[23px] items-stretch border-t border-white pt-1 pb-px text-[14px] leading-[18px] whitespace-nowrap">
      <span className="flex-1 pl-[2px]">For Help, press F1</span>
      <span className={`${cell} w-[149px]`}>Default</span>
      <span className={`${cell} w-[131px]`}>2025.11.24 00:00</span>
      <span className={`${cell} w-[89px]`}>O: 1.15126</span>
      <span className={`${cell} w-[89px]`}>H: 1.15145</span>
      <span className={`${cell} w-[85px]`}>L: 1.15012</span>
      <span className={`${cell} w-[87px]`}>C: 1.15095</span>
      <span className={`${cell} w-[84px]`}>V: 5654</span>
      <span className={`${cell} w-[159px] gap-1`}>
        <svg viewBox="0 0 24 14" aria-hidden="true" className="h-[14px] w-6">
          {[0, 1, 2, 3, 4, 5, 6, 7].map((i) => (
            <g key={i}>
              <rect x={i * 3} y="0" width="2" height={9 - i} fill="#7c8a1c" />
              <rect x={i * 3} y={10 - i} width="2" height={4 + i} fill="#1c4f6a" />
            </g>
          ))}
        </svg>
        318/1 kb
        <svg viewBox="0 0 14 16" aria-hidden="true" className="ml-auto h-4 w-[14px] self-end">
          <path d="M1 16L14 1M5 16l9-10M9 16l5-6" stroke="#8a8a8a" strokeWidth="1.500" />
        </svg>
      </span>
    </footer>
  );
}

export default function App() {
  return (
    <div className="flex h-screen flex-col overflow-hidden bg-[#f0f0f0] font-['Open_Sans','Noto_Sans',sans-serif] text-[#111]">
      <TitleBar />
      <MenuBar />
      <StandardToolbar />
      <DrawingToolbar />
      <ChartWindow />
      <ChartTabs />
      <StatusBar />
      <div className="h-[5px] bg-[#231f20]" />
    </div>
  );
}
